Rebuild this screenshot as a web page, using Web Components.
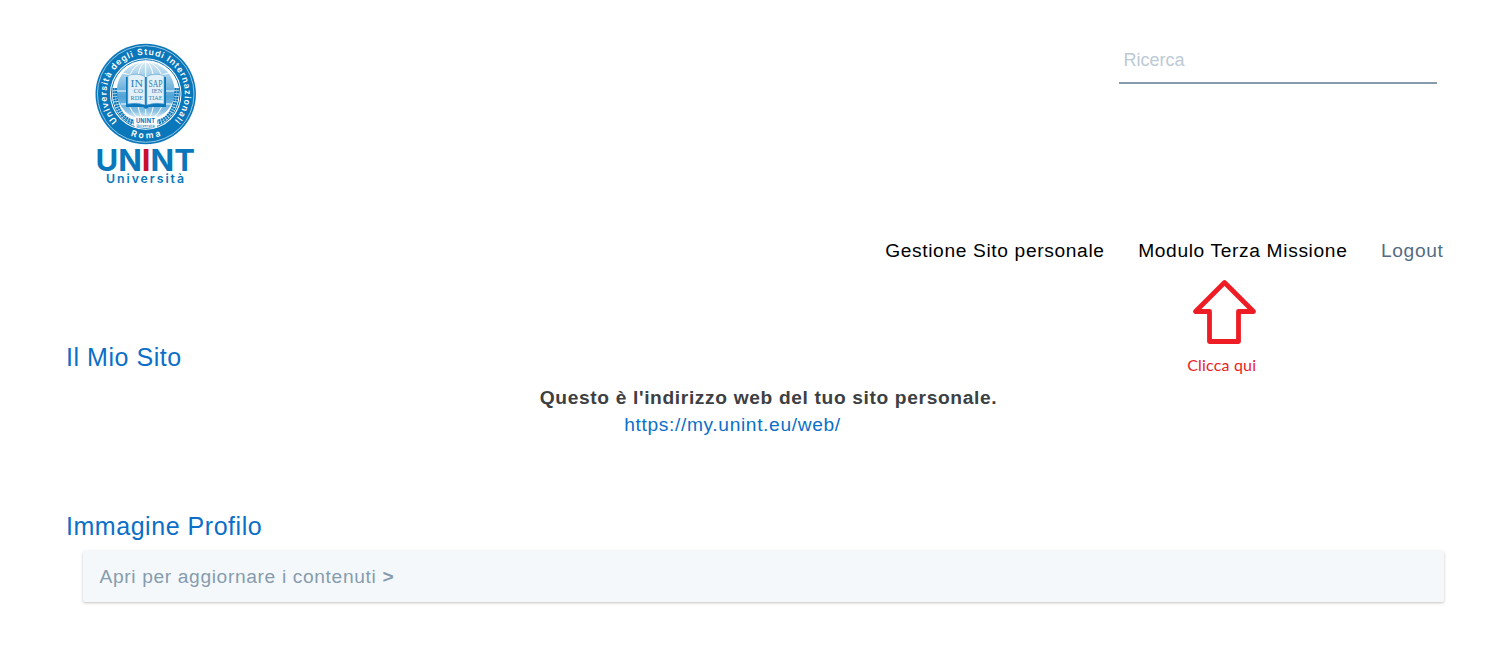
<!DOCTYPE html>
<html lang="it">
<head>
<meta charset="utf-8">
<title>UNINT - Il Mio Sito</title>
<style>
    body {
        margin: 0;
        background: #fff;
        font-family: "Liberation Sans", Arial, sans-serif;
        font-size: 19.2px;
        letter-spacing: 0.64px;
        color: #3c4043;
    }
</style>
</head>
<body>
<pagina-personale></pagina-personale>

<script>
class LogoUnint extends HTMLElement {
    constructor() {
        super();
        this.attachShadow({ mode: 'open' });
    }

    connectedCallback() {
        this.shadowRoot.innerHTML = `
            <style>
                :host {
                    display: block;
                    width: 110px;
                    height: 150px;
                    letter-spacing: 0;
                }
                svg { display: block; }
                text { font-family: "Inter", sans-serif; font-weight: 600; }
                .serif { font-family: "Liberation Serif", serif; font-weight: 400; }
            </style>
            <svg width="110" height="150" viewBox="90 40 110 150" role="img" aria-label="UNINT">
                <defs>
                    <path id="arco" d="M117.500 121.200 A39.200 39.200 0 1 1 173.900 121.200"/>
                    <path id="base" d="M114.300 125.400 A44.400 44.400 0 0 0 177.100 125.400"/>
                    <clipPath id="disco"><circle cx="145.700" cy="94" r="33.500"/></clipPath>
                    <linearGradient id="globo" x1="0" y1="0" x2="0" y2="1">
                        <stop offset="0" stop-color="#d8eaf5"/>
                        <stop offset=".6" stop-color="#4fa3d6"/>
                        <stop offset=".85" stop-color="#8cc2e3"/>
                        <stop offset="1" stop-color="#fff"/>
                    </linearGradient>
                </defs>
                <circle cx="145.700" cy="94" r="50.200" fill="#0a77bb"/>
                <circle cx="145.700" cy="94" r="48.300" fill="none" stroke="#a5cfe8" stroke-width=".9"/>
                <circle cx="145.700" cy="94" r="35.800" fill="#fff"/>
                <circle cx="145.700" cy="94" r="34.300" fill="none" stroke="#0a77bb" stroke-width="1"/>
                <g clip-path="url(#disco)" fill="none">
                    <circle cx="145.700" cy="91" r="29" fill="url(#globo)"/>
                    <g stroke="#fff" stroke-width="1">
                        <ellipse cx="145.700" cy="91" rx="9" ry="29"/>
                        <ellipse cx="145.700" cy="91" rx="19" ry="29"/>
                        <path d="M145.700 60v55M122 73q23.700 7 47.400 0M116 91h60M121 104h50"/>
                    </g>
                    <path d="M114.500 88q1 31 19.500 34M176.900 88q-1 31-19.500 34" stroke="#0a77bb" stroke-width="4.800" stroke-dasharray="2.200 .6"/>
                    <path d="M114.500 88q1 31 19.500 34M176.900 88q-1 31-19.500 34" stroke="#8fc3e2" stroke-width=".6"/>
                </g>
                <path d="M126 77h40v30h-17l-3 2-3-2h-17z" fill="#0a77bb"/>
                <path d="M127.800 75.500q10-3 17.200 1v28.500q-8-3-17.200-1zM164 75.500q-10-3-17.200 1v28.500q8-3 17.200-1z" fill="#e3f0f8" stroke="#4a9bcd" stroke-width=".6"/>
                <g fill="#2f83ba">
                    <text class="serif" x="130.500" y="87" font-size="10" textLength="12.500" lengthAdjust="spacingAndGlyphs">IN</text>
                    <text class="serif" x="133.500" y="92.800" font-size="5.200" textLength="9.500" lengthAdjust="spacingAndGlyphs">CO</text>
                    <text class="serif" x="130.500" y="99.500" font-size="6" textLength="12.500" lengthAdjust="spacingAndGlyphs">RDE</text>
                    <text class="serif" x="148.500" y="87" font-size="10" textLength="14" lengthAdjust="spacingAndGlyphs">SAP</text>
                    <text class="serif" x="151.500" y="92.800" font-size="5.200" textLength="11" lengthAdjust="spacingAndGlyphs">IEN</text>
                    <text class="serif" x="148.500" y="99.500" font-size="6" textLength="14" lengthAdjust="spacingAndGlyphs">TIAE</text>
                </g>
                <path d="M134.500 116.500h22.500v11h-22.500z" fill="#fff"/>
                <text x="136" y="122.500" font-size="5.600" fill="#0a77bb" textLength="19" style="font-weight:700">UN<tspan fill="#d3072a">I</tspan>NT</text>
                <text x="136.500" y="126.600" font-size="3.200" fill="#0a77bb" textLength="18">Università</text>
                <text font-size="8.600" fill="#fff"><textPath href="#arco" textLength="182">Università degli Studi Internazionali</textPath></text>
                <text font-size="8.600" fill="#fff"><textPath href="#base" startOffset="50%" text-anchor="middle" textLength="31">Roma</textPath></text>
                <text x="95.500" y="171.300" font-size="30.500" fill="#0a77bb" textLength="99.500" lengthAdjust="spacingAndGlyphs" style="font-weight:700">UN<tspan fill="#c8102e">I</tspan>NT</text>
                <text x="106" y="183" font-size="12.300" fill="#0a77bb" textLength="78">Università</text>
            </svg>
        `;
    }
}

customElements.define('logo-unint', LogoUnint);


class CampoRicerca extends HTMLElement {
    constructor() {
        super();
        this.attachShadow({ mode: 'open' });
    }

    connectedCallback() {
        this.shadowRoot.innerHTML = `
            <style>
                :host {
                    display: block;
                    box-sizing: border-box;
                    width: 318px;
                    height: 48px;
                    border-bottom: 2px solid #869cad;
                    padding-left: 4.500px;
                    font-size: 18px;
                    line-height: 48px;
                    letter-spacing: 0;
                    color: #bccad4;
                }
            </style>
            <slot></slot>
        `;
    }
}

customElements.define('campo-ricerca', CampoRicerca);


class VoceMenu extends HTMLElement {
    constructor() {
        super();
        this.attachShadow({ mode: 'open' });
    }

    connectedCallback() {
        this.shadowRoot.innerHTML = `
            <style>
                :host {
                    display: block;
                    position: relative;
                    color: #000;
                    line-height: 30px;
                    white-space: nowrap;
                }
                :host([tenue]) { color: #536c83; }
            </style>
            <slot></slot>
            <slot name="nota"></slot>
        `;
    }
}

customElements.define('voce-menu', VoceMenu);


class NotaFreccia extends HTMLElement {
    constructor() {
        super();
        this.attachShadow({ mode: 'open' });
    }

    connectedCallback() {
        this.shadowRoot.innerHTML = `
            <style>
                :host {
                    position: absolute;
                    top: 42px;
                    left: 49px;
                    width: 76px;
                    color: #ee1c24;
                    font-family: "Lato", sans-serif;
                    font-size: 16px;
                    line-height: 20px;
                    letter-spacing: 0.180px;
                }
                svg { display: block; margin: 0 0 9px 5px; }
                .testo { display: block; }
            </style>
            <svg width="66" height="68" viewBox="1192 278 66 68">
                <path d="M1224.500 282.500 1195.500 311.500H1209.500V341.500H1238.500V311.500H1253.500z" fill="none" stroke="#ee1c24" stroke-width="4.800" stroke-linejoin="round"/>
            </svg>
            <span class="testo"><slot></slot></span>
        `;
    }
}

customElements.define('nota-freccia', NotaFreccia);


class TitoloSezione extends HTMLElement {
    constructor() {
        super();
        this.attachShadow({ mode: 'open' });
    }

    connectedCallback() {
        this.shadowRoot.innerHTML = `
            <style>
                :host { display: block; }
                h2 {
                    margin: 0;
                    font-size: 25px;
                    font-weight: 400;
                    line-height: 30px;
                    letter-spacing: 0.540px;
                    color: #0b6fc8;
                }
            </style>
            <h2><slot></slot></h2>
        `;
    }
}

customElements.define('titolo-sezione', TitoloSezione);


class PannelloApribile extends HTMLElement {
    constructor() {
        super();
        this.attachShadow({ mode: 'open' });
    }

    connectedCallback() {
        this.shadowRoot.innerHTML = `
            <style>
                :host {
                    display: block;
                    margin: 10px 1px 0 17px;
                    padding-left: 16.500px;
                    background: #f4f8fb;
                    border-radius: 2px;
                    box-shadow: 0 1px 3px rgba(0, 0, 0, 0.24);
                    line-height: 51px;
                    color: #869cad;
                }
            </style>
            <slot></slot>
        `;
    }
}

customElements.define('pannello-apribile', PannelloApribile);


class PaginaPersonale extends HTMLElement {
    constructor() {
        super();
        this.attachShadow({ mode: 'open' });
    }

    connectedCallback() {
        this.shadowRoot.innerHTML = `
            <style>
                :host {
                    display: block;
                    box-sizing: border-box;
                    height: 648px;
                    padding: 36px 45px 0 66px;
                    overflow: hidden;
                }
                header {
                    display: flex;
                    justify-content: space-between;
                    height: 200px;
                    padding: 0 8px 0 24px;
                    box-sizing: border-box;
                }
                logo-unint { margin-top: 4px; }
                nav {
                    display: flex;
                    justify-content: flex-end;
                    gap: 33.500px;
                    height: 106px;
                    padding-right: 1.500px;
                }
                .indirizzo {
                    display: grid;
                    align-content: start;
                    justify-items: center;
                    height: 127px;
                    padding: 12px 0 0 26px;
                    box-sizing: border-box;
                    line-height: 27px;
                }
                .indirizzo a {
                    margin-right: 72px;
                    color: #0b6fc8;
                    text-decoration: none;
                }
                section + section { margin-top: 12px; }
            </style>
            <header>
                <logo-unint></logo-unint>
                <campo-ricerca>Ricerca</campo-ricerca>
            </header>
            <nav>
                <voce-menu>Gestione Sito personale</voce-menu>
                <voce-menu>Modulo Terza Missione<nota-freccia slot="nota">Clicca qui</nota-freccia></voce-menu>
                <voce-menu tenue>Logout</voce-menu>
            </nav>
            <section>
                <titolo-sezione>Il Mio Sito</titolo-sezione>
                <div class="indirizzo">
                    <b>Questo è l'indirizzo web del tuo sito personale.</b>
                    <a href="#">https://my.unint.eu/web/</a>
                </div>
            </section>
            <section>
                <titolo-sezione>Immagine Profilo</titolo-sezione>
                <pannello-apribile>Apri per aggiornare i contenuti <b>&gt;</b></pannello-apribile>
            </section>
        `;
    }
}

customElements.define('pagina-personale', PaginaPersonale);
</script>
</body>
</html>
